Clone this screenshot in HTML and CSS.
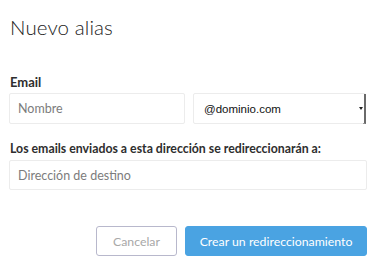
FILE: index.html
```html
<!DOCTYPE html>
<html>
<head>
<meta charset="utf-8">
<link rel="stylesheet" href="styles.css">
</head>
<body>
<div class="modal">
  <h1 class="title">Nuevo alias</h1>
  <label class="label label-email">Email</label>
  <div class="row">
    <input class="field field-name" type="text" placeholder="Nombre">
    <div class="select">
      <span class="select-text">@dominio.com</span>
      <span class="select-bar"><span class="arrow"></span></span>
    </div>
  </div>
  <label class="label label-dest">Los emails enviados a esta dirección se redireccionarán a:</label>
  <input class="field field-dest" type="text" placeholder="Dirección de destino">
  <div class="actions">
    <button class="btn btn-cancel">Cancelar</button>
    <button class="btn btn-primary">Crear un redireccionamiento</button>
  </div>
</div>
</body>
</html>
```
FILE: styles.css
```css
* { box-sizing: border-box; }
html, body { margin: 0; padding: 0; background: #fff; }
body { font-family: Lato, "Open Sans", sans-serif; color: #333; }
.modal { width: 358px; margin-left: 9px; display: flex; flex-direction: column; }
.title { margin: 15px 0 0 1px; font-size: 20.5px; font-weight: 300; color: #222; line-height: 24px; letter-spacing: 0.1px; }
.label { display: block; font-size: 13px; font-weight: 700; color: #2e2e2e; line-height: 16px; margin-left: 1px; }
.label-email { margin-top: 35px; }
.label-dest { margin-top: 17px; font-size: 12.3px; }
.row { display: flex; gap: 8px; margin-top: 3px; }
.field { height: 31px; border: 1px solid #ececec; border-radius: 2px; padding: 0 8px; font-family: Lato, sans-serif; font-size: 12.5px; color: #333; background: #fff; outline: none; }
.field::placeholder { color: #7c7c7c; }
.field-name { width: 176px; }
.field-dest { width: 358px; margin-top: 3px; height: 30px; }
.select { flex: 1; height: 31px; border: 1px solid #ececec; border-radius: 2px; display: flex; align-items: center; position: relative; padding-left: 10px; margin-right: 1px; }
.select-text { font-family: "Liberation Sans", Arial, sans-serif; font-size: 11.5px; color: #111; }
.select-bar { position: absolute; right: -1px; top: 0; bottom: -1px; width: 3px; border-right: 2px solid #6a6a6a; border-bottom: 1px solid #9a9a9a; }
.arrow { position: absolute; right: 1px; top: 13px; width: 0; height: 0; border-left: 2px solid transparent; border-right: 2px solid transparent; border-top: 3px solid #222; }
.actions { display: flex; justify-content: flex-end; gap: 8px; margin-top: 36px; }
.btn { height: 30px; border-radius: 3px; font-family: Lato, sans-serif; font-size: 12.3px; padding: 0; }
.btn-cancel { width: 81px; background: #fff; border: 1px solid #b8b8cc; color: #a8a8a8; }
.btn-primary { width: 182px; background: #4aa3e2; border: 1px solid #4aa3e2; color: #fff; }
```
